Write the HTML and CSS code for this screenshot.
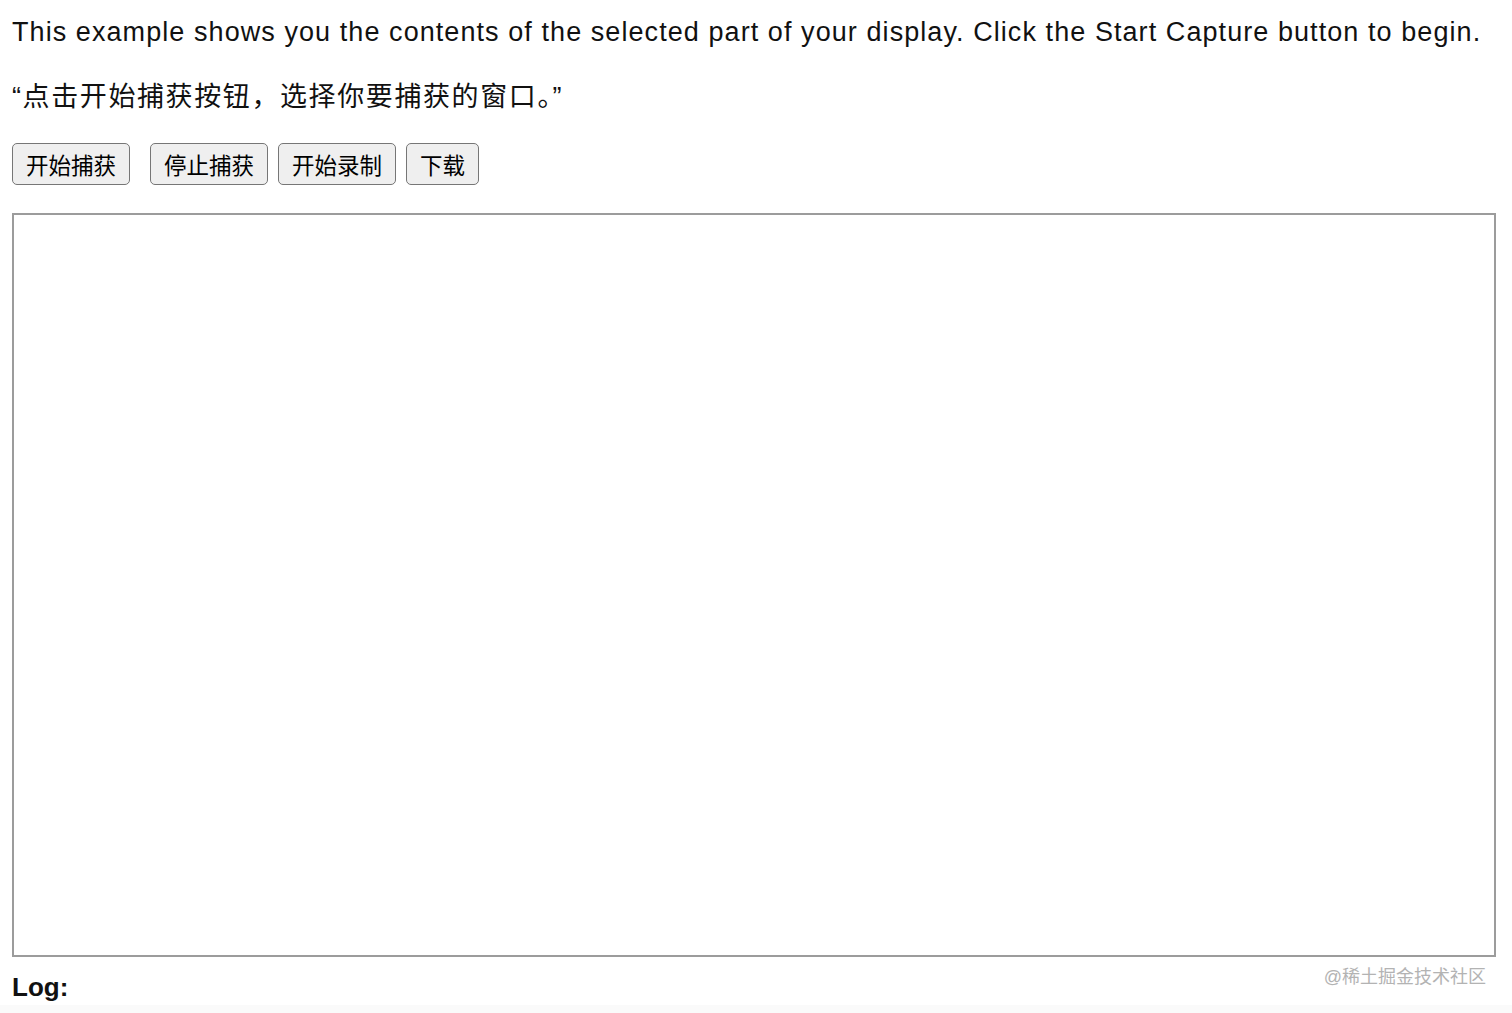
FILE: index.html
```html
<!DOCTYPE html>
<html lang="zh-CN">
<head>
    <meta charset="UTF-8">
    <title>屏幕捕获</title>
    <link rel="stylesheet" href="styles.css">
</head>
<body>
    <p class="intro">This example shows you the contents of the selected part of your display. Click the Start Capture button to begin.</p>

    <p class="hint">“点击开始捕获按钮，选择你要捕获的窗口。”</p>

    <div class="controls">
        <button id="start" class="btn btn-first">开始捕获</button>
        <button id="stop" class="btn">停止捕获</button>
        <button id="startRecord" class="btn">开始录制</button>
        <button id="download" class="btn">下载</button>
    </div>

    <div id="video" class="video"></div>

    <div class="log-row">
        <strong class="log-label">Log:</strong>
        <span class="watermark">@稀土掘金技术社区</span>
    </div>
    <pre id="log" class="log"></pre>
</body>
</html>
```

FILE: styles.css
```css
body {
    margin: 0;
    padding: 14px 12px 0;
    font-family: "Liberation Sans", "Noto Sans CJK SC", sans-serif;
    font-size: 26px;
    line-height: 36px;
    color: #111;
    background: #fff;
}
.intro {
    margin: 0 0 29px;
    font-size: 27px;
    letter-spacing: 1.07px;
}
.hint {
    margin: 0;
    font-size: 27px;
    letter-spacing: 1.6px;
}
.controls {
    display: flex;
    gap: 10px;
    margin-top: 28px;
}
.btn {
    height: 42px;
    padding: 0 13px;
    font-family: "Liberation Sans", "Noto Sans CJK SC", sans-serif;
    font-size: 22.5px;
    color: #000;
    background: #efefef;
    border: 1.5px solid #767676;
    border-radius: 5px;
}
.btn-first {
    margin-right: 10px;
}
.video {
    box-sizing: border-box;
    width: 1484px;
    height: 744px;
    margin-top: 28px;
    border: 2px solid #9c9c9c;
    background: #fff;
}
.log-row {
    position: relative;
    margin-top: 12px;
}
.log-label {
    font-weight: bold;
}
.watermark {
    position: absolute;
    right: 14px;
    top: -10px;
    font-size: 18px;
    color: #b3b3b3;
}
.log {
    margin: 0 -12px;
    height: 40px;
    background: #fafafa;
}
```
